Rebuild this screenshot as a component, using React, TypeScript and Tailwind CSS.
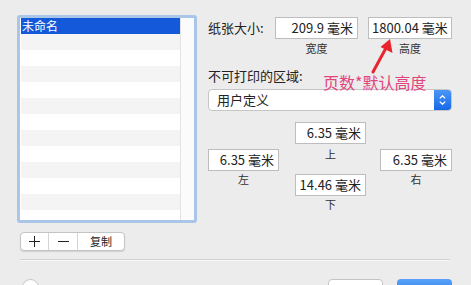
import React from "react";

const rows = Array.from({ length: 13 }, (_, i) => i);

const Field = ({ value, width, left }: { value: string; width: string; left?: boolean }) => (
  <div
    className={`${width} h-[22px] bg-white border border-[#bdbdbd] flex items-center overflow-hidden whitespace-nowrap text-[13px] text-[#222] ${
      left ? "justify-start pl-[3px]" : "justify-end pr-[4px]"
    }`}
  >
    {value}
  </div>
);

const Caption = ({ text, className = "" }: { text: string; className?: string }) => (
  <div className={`text-[11px] leading-[14px] text-[#333] text-center ${className}`}>{text}</div>
);

export default function App() {
  return (
    <div
      className="relative w-[471px] h-[285px] overflow-hidden bg-[#ececec] pt-[15px] pl-[17px]"
      style={{ fontFamily: '"Noto Sans CJK SC", "Noto Sans", sans-serif' }}
    >
      <div className="flex">
        {/* left: page list */}
        <div className="w-[180px]">
          <div className="w-[180px] h-[208px] border-[3px] border-[#a9c5e8] rounded-[3px] bg-white flex overflow-hidden">
            <div className="w-[160px] pl-[1px]">
              {rows.map((i) =>
                i === 0 ? (
                  <div key={i} className="h-[16px] bg-[#1459d9] text-white text-[12px] leading-[16px] pl-[1px]">
                    未命名
                  </div>
                ) : (
                  <div key={i} className={`h-[16px] ${i % 2 === 1 ? "bg-[#f4f4f4]" : "bg-white"}`} />
                )
              )}
            </div>
            <div className="flex-1 bg-[#fbfbfb] border-l border-[#e4e4e4]" />
          </div>

          <div className="ml-[3px] mt-[9px] w-[105px] h-[19px] flex bg-white border border-[#c4c4c4] rounded-[4px] shadow-[0_1px_1px_rgba(0,0,0,0.12)] text-[#222]">
            <div className="w-[28px] flex items-center justify-center border-r border-[#d4d4d4]">
              <svg width="11" height="11" viewBox="0 0 11 11">
                <path d="M5.5 0 V11 M0 5.5 H11" stroke="#222" strokeWidth="1" />
              </svg>
            </div>
            <div className="w-[29px] flex items-center justify-center border-r border-[#d4d4d4]">
              <svg width="11" height="11" viewBox="0 0 11 11">
                <path d="M0 5.5 H11" stroke="#222" strokeWidth="1" />
              </svg>
            </div>
            <div className="flex-1 flex items-center justify-center text-[11px]">复制</div>
          </div>
        </div>

        {/* right: paper settings */}
        <div className="ml-[11px] w-[244px] pt-[2px] text-[#222]">
          <div className="flex items-start">
            <div className="w-[67px] h-[22px] flex items-center text-[13px]">纸张大小:</div>
            <div className="flex flex-col items-center">
              <Field value="209.9 毫米" width="w-[83px]" />
              <Caption text="宽度" className="mt-[2px]" />
            </div>
            <div className="ml-[10px] flex flex-col items-center">
              <Field value="1800.04 毫米" width="w-[84px]" left />
              <Caption text="高度" className="mt-[2px]" />
            </div>
          </div>

          <div className="mt-[13px] text-[13px] leading-[16px]">不可打印的区域:</div>

          <div className="mt-[5px] w-[244px] h-[22px] flex bg-white border border-[#c6c6c6] rounded-[4px] overflow-hidden">
            <div className="flex-1 flex items-center pl-[8px] text-[13px]">用户定义</div>
            <div className="w-[17px] bg-gradient-to-b from-[#4a97f7] to-[#1668e6] flex flex-col items-center justify-center gap-[2px]">
              <svg width="7" height="4" viewBox="0 0 7 4">
                <path d="M0.8 3.4 L3.5 0.8 L6.2 3.4" fill="none" stroke="white" strokeWidth="1.3" />
              </svg>
              <svg width="7" height="4" viewBox="0 0 7 4">
                <path d="M0.8 0.6 L3.5 3.2 L6.2 0.6" fill="none" stroke="white" strokeWidth="1.3" />
              </svg>
            </div>
          </div>

          <div className="mt-[11px] flex">
            <div className="mt-[27px] flex flex-col items-center">
              <Field value="6.35 毫米" width="w-[71px]" />
              <Caption text="左" className="mt-[1px]" />
            </div>
            <div className="ml-[16px] flex flex-col items-center">
              <Field value="6.35 毫米" width="w-[71px]" />
              <Caption text="上" className="mt-[3px]" />
              <div className="mt-[13px]">
                <Field value="14.46 毫米" width="w-[71px]" />
              </div>
              <Caption text="下" className="mt-[1px]" />
            </div>
            <div className="ml-[14px] mt-[27px] flex flex-col items-center">
              <Field value="6.35 毫米" width="w-[72px]" />
              <Caption text="右" className="mt-[1px]" />
            </div>
          </div>
        </div>
      </div>

      {/* separator */}
      <div className="ml-[3px] mt-[8px] w-[430px] h-[2px] border-t border-[#d2d2d2] bg-[#f6f6f6]" />

      {/* bottom buttons, mostly cut off */}
      <div className="mt-[18px] flex items-start">
        <div className="ml-[5px] w-[17px] h-[17px] rounded-full bg-white border border-[#c4c4c4]" />
        <div className="ml-[289px] w-[55px] h-[21px] bg-white border border-[#c4c4c4] rounded-[4px]" />
        <div className="ml-[14px] w-[55px] h-[21px] bg-gradient-to-b from-[#5aa2f8] to-[#1a6ce8] rounded-[4px]" />
      </div>

      {/* annotation overlay */}
      <div className="absolute left-[323px] top-[72px] text-[16px] leading-[20px] text-[#e2457d] whitespace-nowrap">
        页数*默认高度
      </div>
      <svg className="absolute left-[365px] top-[36px]" width="32" height="40" viewBox="0 0 32 40">
        <path d="M8 36 L21 12" stroke="#e8242d" strokeWidth="3" strokeLinecap="round" fill="none" />
        <path d="M25 3 L27.5 17 L15.5 11 Z" fill="#e8242d" />
      </svg>
    </div>
  );
}
